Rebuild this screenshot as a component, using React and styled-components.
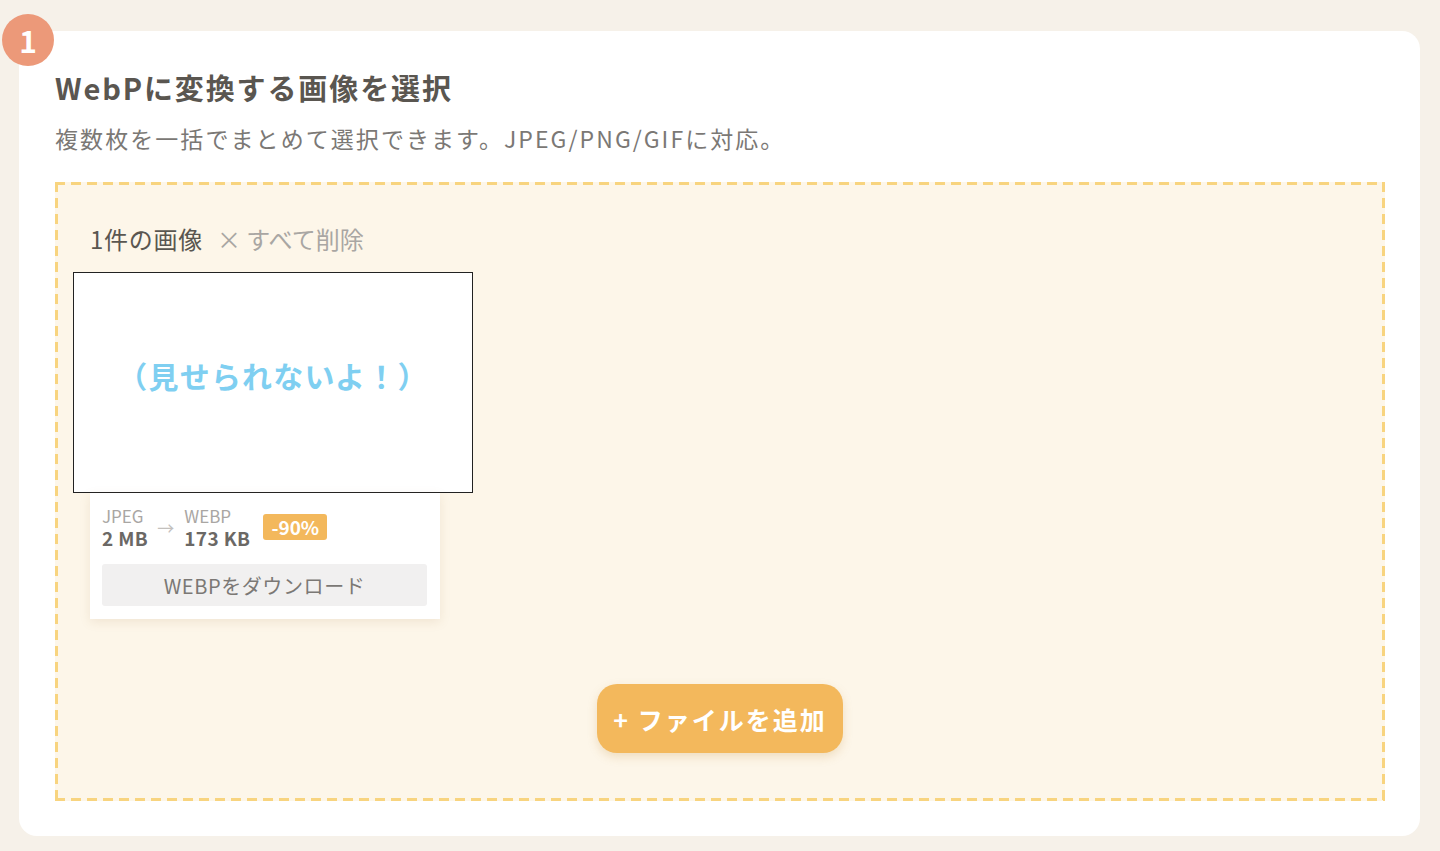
import React from 'react';
import styled, { createGlobalStyle } from 'styled-components';

const GlobalStyle = createGlobalStyle`
  html, body {
    margin: 0;
    padding: 0;
    background: #f6f1e9;
  }
  body {
    font-family: 'Noto Sans CJK JP', 'Noto Sans', sans-serif;
    color: #5a5650;
  }
`;

const colors = {
  orange: '#f3b85c',
  salmon: '#ec9979',
  dash: '#f8d47f',
  zone: '#fdf6e9',
  text: '#5a5650',
  muted: '#7b7875',
  light: '#a9a6a3',
  sky: '#7fcff1',
};

const Page = styled.div`
  padding: 31px 20px 16px 19px;
`;

const Card = styled.section`
  position: relative;
  background: #fff;
  border-radius: 18px;
  padding: 34px 35px 35px 36px;
`;

const StepBadge = styled.span`
  position: absolute;
  top: -17px;
  left: -17px;
  width: 52px;
  height: 52px;
  border-radius: 50%;
  background: ${colors.salmon};
  color: #fff;
  font-size: 30px;
  font-weight: 700;
  display: flex;
  align-items: center;
  justify-content: center;
  line-height: 1;
`;

const Title = styled.h2`
  margin: 0;
  font-size: 29px;
  line-height: 44px;
  font-weight: 700;
  letter-spacing: 0.065em;
  color: ${colors.text};
`;

const Lead = styled.p`
  margin: 12px 0 27px;
  font-size: 23px;
  line-height: 34px;
  letter-spacing: 0.09em;
  color: ${colors.muted};
`;

const dashes = (dir) =>
  `repeating-linear-gradient(${dir}, ${colors.dash} 0 10px, transparent 10px 16px)`;

const DropZone = styled.div`
  background-color: ${colors.zone};
  background-image: ${dashes('90deg')}, ${dashes('90deg')}, ${dashes('180deg')},
    ${dashes('180deg')};
  background-size: 100% 3px, 100% 3px, 3px 100%, 3px 100%;
  background-position: 0 0, 0 100%, 0 0, 100% 0;
  background-repeat: no-repeat;
  padding: 41px 18px 48px;
  display: flex;
  flex-direction: column;
`;

const ListHeader = styled.div`
  display: flex;
  align-items: baseline;
  gap: 14px;
  padding-left: 17px;
  font-size: 24px;
  line-height: 32px;
  letter-spacing: 0.03em;
`;

const Count = styled.span`
  color: ${colors.text};
`;

const ClearAll = styled.button`
  border: 0;
  background: none;
  padding: 0;
  font: inherit;
  color: ${colors.light};
  cursor: pointer;
`;

const Item = styled.div`
  margin-top: 17px;
  display: flex;
  flex-direction: column;
  align-items: flex-start;
`;

const Preview = styled.div`
  box-sizing: border-box;
  width: 400px;
  height: 221px;
  padding-bottom: 16px;
  border: 1px solid #222;
  background: #fff;
  display: flex;
  align-items: center;
  justify-content: center;
  color: ${colors.sky};
  font-size: 30px;
  font-weight: 700;
  letter-spacing: 0.04em;
`;

const Info = styled.div`
  width: 325px;
  margin-left: 17px;
  background: #fff;
  padding: 12px 13px 13px 12px;
  box-shadow: 0 3px 10px rgba(160, 130, 80, 0.14);
  display: flex;
  flex-direction: column;
  gap: 15px;
`;

const Stats = styled.div`
  display: flex;
  align-items: center;
`;

const Stat = styled.div`
  display: flex;
  flex-direction: column;
`;

const Format = styled.span`
  font-size: 17px;
  line-height: 22px;
  color: ${colors.light};
`;

const Size = styled.span`
  font-size: 19px;
  line-height: 22px;
  font-weight: 700;
  letter-spacing: 0.02em;
  color: #6b6865;
`;

const Arrow = styled.span`
  color: #c3c0bd;
  font-size: 17px;
  margin: 0 10px 0 9px;
`;

const Saving = styled.span`
  margin-left: 13px;
  background: ${colors.orange};
  color: #fff;
  font-size: 19px;
  font-weight: 700;
  line-height: 26px;
  padding: 0 8px;
  border-radius: 3px;
`;

const DownloadButton = styled.button`
  border: 0;
  border-radius: 3px;
  height: 42px;
  background: #f1f0f0;
  color: ${colors.muted};
  font-family: inherit;
  font-size: 20px;
  letter-spacing: 0.03em;
  cursor: pointer;
`;

const AddButton = styled.button`
  align-self: center;
  margin-top: 65px;
  width: 246px;
  height: 69px;
  border: 0;
  border-radius: 20px;
  background: ${colors.orange};
  color: #fff;
  font-family: inherit;
  font-size: 25px;
  font-weight: 700;
  letter-spacing: 0.08em;
  box-shadow: 0 4px 10px rgba(200, 150, 70, 0.25);
  cursor: pointer;
`;

const App = () => (
  <>
    <GlobalStyle />
    <Page>
      <Card>
        <StepBadge>1</StepBadge>
        <Title>WebPに変換する画像を選択</Title>
        <Lead>複数枚を一括でまとめて選択できます。JPEG/PNG/GIFに対応。</Lead>
        <DropZone>
          <ListHeader>
            <Count>1件の画像</Count>
            <ClearAll>× すべて削除</ClearAll>
          </ListHeader>
          <Item>
            <Preview>（見せられないよ！）</Preview>
            <Info>
              <Stats>
                <Stat>
                  <Format>JPEG</Format>
                  <Size>2 MB</Size>
                </Stat>
                <Arrow>→</Arrow>
                <Stat>
                  <Format>WEBP</Format>
                  <Size>173 KB</Size>
                </Stat>
                <Saving>-90%</Saving>
              </Stats>
              <DownloadButton>WEBPをダウンロード</DownloadButton>
            </Info>
          </Item>
          <AddButton>+ ファイルを追加</AddButton>
        </DropZone>
      </Card>
    </Page>
  </>
);

export default App;
